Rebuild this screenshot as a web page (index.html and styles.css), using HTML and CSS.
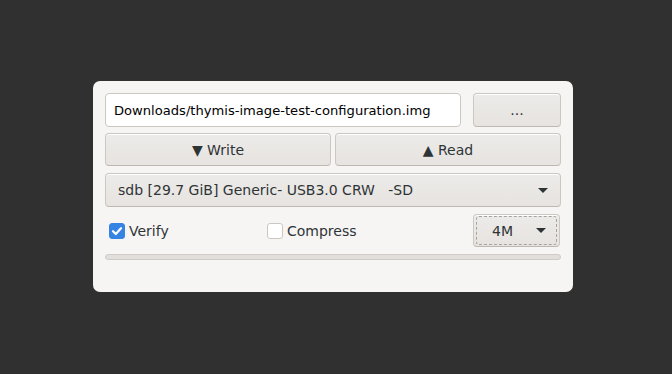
FILE: index.html
```html
<!DOCTYPE html>
<html lang="en">
<head>
    <meta charset="UTF-8">
    <title>Image Writer</title>
    <link rel="stylesheet" href="styles.css">
</head>
<body>

    <div class="window">
        <div class="file-row">
            <div class="entry">Downloads/thymis-image-test-configuration.img</div>
            <button class="btn browse">...</button>
        </div>
        <div class="action-row">
            <button class="btn">&#9660; Write</button>
            <button class="btn">&#9650; Read</button>
        </div>
        <div class="combo device">
            <span class="label">sdb [29.7 GiB] Generic- USB3.0 CRW &nbsp; -SD</span>
            <span class="arrow"></span>
        </div>
        <div class="options-row">
            <label class="check"><span class="box checked"><svg viewBox="0 0 16 16" width="16" height="16"><path d="M4 8.2 L6.8 11 L12 5.2" fill="none" stroke="#fff" stroke-width="2.2" stroke-linecap="round" stroke-linejoin="round"/></svg></span>Verify</label>
            <label class="check"><span class="box"></span>Compress</label>
            <div class="combo block-size">
                <div class="focus-ring">
                    <span>4M</span>
                    <span class="arrow"></span>
                </div>
            </div>
        </div>
        <div class="progress"></div>
    </div>

</body>
</html>
```

FILE: styles.css
```css
body { margin: 0; background-color: #303030; font-family: "DejaVu Sans", sans-serif; font-size: 14px; color: #2e3436; height: 374px; }
.window { position: absolute; left: 93px; top: 81px; width: 456px; height: 187px; padding: 12px; background-color: #f6f5f4; border-radius: 7px; display: flex; flex-direction: column; }
.file-row { display: flex; gap: 12px; height: 34px; }
.entry { flex: 1; background: #fff; border: 1px solid #cdc7c2; border-radius: 4px; padding: 0 8px; display: flex; align-items: center; color: #000; font-size: 13.1px; white-space: nowrap; overflow: hidden; }
.btn { font-family: inherit; font-size: 14px; color: #2e3436; background: linear-gradient(#edebe9, #e6e3e0); border: 1px solid #cdc7c2; border-bottom-color: #bfb8b1; border-radius: 4px; box-shadow: inset 0 1px #fff; padding: 0; }
.browse { width: 88px; }
.action-row { display: flex; gap: 4px; height: 33px; margin-top: 6px; }
.action-row .btn { flex: 1; }
.combo { background: linear-gradient(#edebe9, #e6e3e0); border: 1px solid #cdc7c2; border-bottom-color: #bfb8b1; border-radius: 4px; box-shadow: inset 0 1px #fff; display: flex; align-items: center; }
.device { height: 32px; margin-top: 7px; padding: 0 12px 0 12px; justify-content: space-between; }
.device .label { white-space: pre; }
.arrow { width: 0; height: 0; border-left: 5px solid transparent; border-right: 5px solid transparent; border-top: 5px solid #2e3436; }
.options-row { display: flex; align-items: center; height: 33px; margin-top: 7px; }
.check { display: flex; align-items: center; gap: 4px; padding-left: 4px; }
.check:first-child { width: 154px; }
.check:nth-child(2) { flex: 1; }
.box { width: 14px; height: 14px; border: 1px solid #cdc7c2; border-radius: 3px; background: #fff; display: flex; }
.box.checked { background: #3584e4; border-color: #3584e4; }
.box.checked svg { margin: -1px; }
.block-size { margin-right: 1px; padding: 2px; box-sizing: border-box; width: 87px; height: 33px; }
.focus-ring { flex: 1; height: 100%; border: 1px dashed #a6a39f; border-radius: 3px; display: flex; align-items: center; justify-content: space-between; padding: 0 10px 0 15px; }
.progress { height: 4px; margin-top: 7px; background: #e1dedb; border: 1px solid #d0ccc8; border-radius: 3px; }
```
